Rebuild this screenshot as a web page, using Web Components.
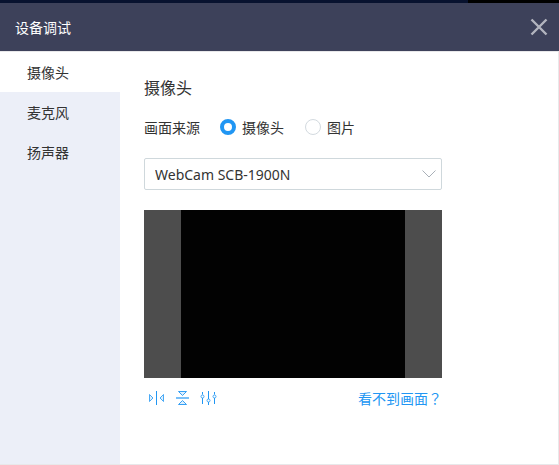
<!DOCTYPE html>
<html lang="zh-CN">
<head>
<meta charset="utf-8">
<title>设备调试</title>
<style>
  html, body { height: 100%; margin: 0; }
  body {
    font: 14px/20px "Noto Sans", "Noto Sans CJK SC", sans-serif;
    color: #333;
    background: #fff;
  }
</style>
</head>
<body>
<device-dialog heading="设备调试">
  <side-tabs slot="nav">
    <side-tab active>摄像头</side-tab>
    <side-tab>麦克风</side-tab>
    <side-tab>扬声器</side-tab>
  </side-tabs>
  <camera-panel></camera-panel>
</device-dialog>

<script>
const define = (name, markup, setup) => {
  const template = document.createElement('template');
  template.innerHTML = markup;
  customElements.define(name, class extends HTMLElement {
    constructor() {
      super();
      this.attachShadow({ mode: 'open' }).append(template.content.cloneNode(true));
    }
    connectedCallback() { if (setup) setup(this, this.shadowRoot); }
  });
};

define('device-dialog', `
  <style>
    :host { display: flex; flex-direction: column; min-height: 100vh; box-sizing: border-box; }
    .backdrop { display: flex; height: 3px; background: #08122f; justify-content: flex-end; }
    .backdrop span { width: 91px; background: #000; }
    header { display: flex; align-items: center; justify-content: space-between; height: 48px; padding: 0 11px 0 15px; background: #3d415a; color: #fff; }
    h1 { margin: 0; padding-top: 2px; font: inherit; }
    button { display: flex; padding: 0; border: 0; background: none; cursor: pointer; }
    .body { flex: 1; display: flex; border: 1px solid #e8e8ea; border-left: 0; }
    main { flex: 1; min-width: 0; padding: 24px; }
  </style>
  <div class="backdrop"><span></span></div>
  <header>
    <h1></h1>
    <button type="button" aria-label="关闭">
      <svg width="18" height="18" viewBox="0 0 18 18" fill="none" stroke="#b2b4be" stroke-width="2.400"><path d="M1.500 1.500l15 15M16.500 1.500l-15 15"/></svg>
    </button>
  </header>
  <div class="body"><slot name="nav"></slot><main><slot></slot></main></div>
`, (el, root) => { root.querySelector('h1').textContent = el.getAttribute('heading'); });

define('side-tabs', `
  <style>
    :host { display: block; flex: 0 0 120px; background: #eceff8; }
    nav { display: flex; flex-direction: column; }
  </style>
  <nav><slot></slot></nav>
`);

define('side-tab', `
  <style>
    :host { display: block; }
    :host([active]) { background: #fff; }
    button { width: 100%; height: 40px; padding: 2px 27px 0; border: 0; background: none; font: inherit; color: inherit; text-align: left; cursor: pointer; }
  </style>
  <button type="button"><slot></slot></button>
`);

define('source-picker', `
  <style>
    :host { display: block; }
    fieldset { display: flex; align-items: flex-end; margin: 0; padding: 0; border: 0; }
    .name { margin-right: 20px; }
    label { display: flex; align-items: flex-start; gap: 6px; margin-right: 21px; }
    input { appearance: none; box-sizing: border-box; width: 16px; height: 16px; margin: 1px 0 0; border: 1px solid #d3dadf; border-radius: 50%; background: #fff; }
    input:checked { border: 4px solid #2196f3; }
  </style>
  <fieldset aria-labelledby="name">
    <span class="name" id="name">画面来源</span>
    <label><input type="radio" name="source" checked>摄像头</label>
    <label><input type="radio" name="source">图片</label>
  </fieldset>
`);

define('camera-select', `
  <style>
    :host { display: grid; align-items: center; }
    select, svg { grid-area: 1 / 1; }
    select { appearance: none; box-sizing: border-box; width: 100%; height: 32px; padding: 2px 28px 0 10px; border: 1px solid #cfd8dc; border-radius: 2px; background: #fff; font: inherit; color: inherit; }
    svg { justify-self: end; margin-right: 6px; pointer-events: none; }
  </style>
  <select aria-label="摄像头"><option>WebCam SCB-1900N</option></select>
  <svg width="14" height="8" viewBox="0 0 14 8" fill="none" stroke="#a9b0b8"><path d="M.5.5L7 7 13.500.5"/></svg>
`);

define('camera-preview', `
  <style>
    :host { display: flex; justify-content: center; height: 168px; background: #4d4d4d; }
    div { width: 224px; background: #020202; }
  </style>
  <div></div>
`);

define('preview-tools', `
  <style>
    :host { display: flex; align-items: center; justify-content: space-between; }
    .tools { display: flex; gap: 10px; margin-left: 4px; }
    button { display: flex; padding: 0; border: 0; background: none; cursor: pointer; }
    svg { fill: none; stroke: #2196f3; }
    a { color: #2196f3; text-decoration: none; font-family: "Noto Sans CJK TC", sans-serif; }
  </style>
  <div class="tools">
    <button type="button" aria-label="左右翻转">
      <svg width="16" height="16" viewBox="0 0 16 16"><path d="M8.500 1v14"/><path stroke-opacity=".8" fill="#2196f3" fill-opacity=".15" d="M1.500 4.500v7L5 8zM15.500 4.500v7L12 8z"/></svg>
    </button>
    <button type="button" aria-label="上下翻转">
      <svg width="16" height="16" viewBox="0 0 16 16"><path stroke-opacity=".6" stroke-width="2" d="M2 8h13"/><path stroke-opacity=".9" fill="#2196f3" fill-opacity=".15" d="M4.500 1.500h8l-4 4zM4.500 14.500h8l-4-4z"/></svg>
    </button>
    <button type="button" aria-label="画面调节">
      <svg width="18" height="16" viewBox="0 0 18 16"><path d="M2.500 2v2.500M2.500 8v6M8.500 1v8M8.500 12v3M14.500 2v2.500M14.500 8v6"/><g stroke-opacity=".8"><circle cx="2.500" cy="6.500" r="1.500"/><circle cx="8.500" cy="10.500" r="1.500"/><circle cx="14.500" cy="6.500" r="1.500"/></g></svg>
    </button>
  </div>
  <a lang="zh-TW" href="#help">看不到画面？</a>
`);

define('camera-panel', `
  <style>
    :host { display: flex; flex-direction: column; max-width: 298px; }
    h2 { margin: 0; font-size: 16px; font-weight: 400; line-height: 24px; }
    source-picker { margin: 18px 0 20px; }
    camera-preview { margin: 20px 0 10px; }
  </style>
  <h2>摄像头</h2>
  <source-picker></source-picker>
  <camera-select></camera-select>
  <camera-preview></camera-preview>
  <preview-tools></preview-tools>
`);
</script>
</body>
</html>
